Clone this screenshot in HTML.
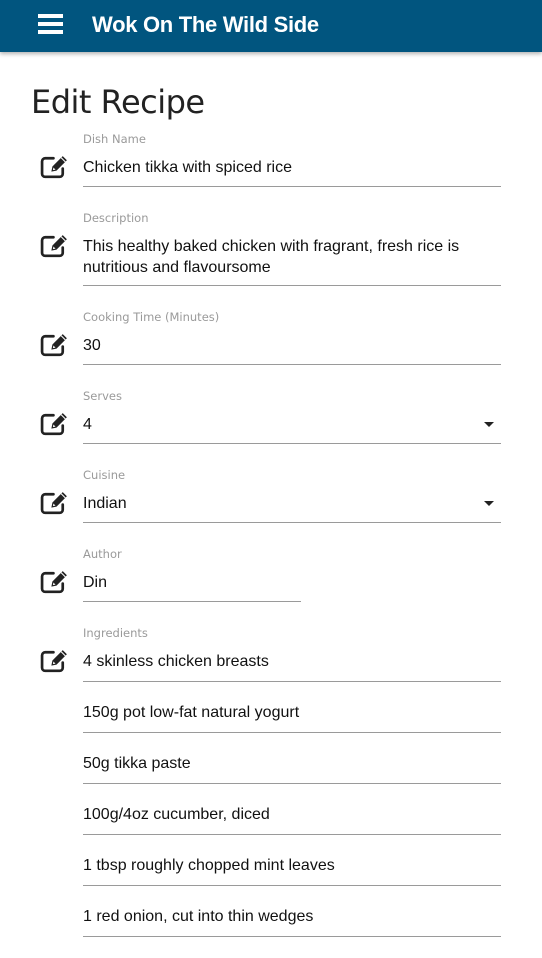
<!DOCTYPE html>
<html><head><meta charset="utf-8"><style>
*{margin:0;padding:0;box-sizing:border-box}
body{width:542px;height:958px;background:#fff;font-family:"Liberation Sans",sans-serif;position:relative;overflow:hidden}
.hdr{position:absolute;left:0;top:0;width:542px;height:52px;background:#01557f;box-shadow:0 2px 4px rgba(0,0,0,.3)}
.hdr .t{position:absolute;left:92px;top:12px;color:#fff;font-size:22px;font-weight:bold;font-family:"Liberation Sans",sans-serif;letter-spacing:-0.3px}
.bar{position:absolute;left:38px;width:25px;height:3.5px;background:#fff}
h1{position:absolute;left:31px;top:83px;font-weight:normal;font-size:32px;color:#222;font-family:"DejaVu Sans",sans-serif;letter-spacing:-0.5px}
.lb{position:absolute;left:83px;font-size:11.5px;color:#9a9a9a;font-family:"DejaVu Sans",sans-serif}
.tx{position:absolute;left:83px;font-size:16px;color:#111;line-height:21px}
.ln{position:absolute;left:83px;width:418px;height:1px;background:#9a9a9a}
.ic{position:absolute;left:40px;width:31px;height:27px}
.ar{position:absolute;left:484px;width:0;height:0;border-left:5px solid transparent;border-right:5px solid transparent;border-top:5px solid #222}
</style></head><body>
<div class="hdr">
<div class="bar" style="top:14px"></div><div class="bar" style="top:22px"></div><div class="bar" style="top:30px"></div>
<div class="t">Wok On The Wild Side</div></div>
<h1>Edit Recipe</h1>

<svg width="0" height="0" style="position:absolute"><defs><g id="pen"><path d="M13 5H5a3 3 0 0 0-3 3v12a3 3 0 0 0 3 3h14a3 3 0 0 0 3-3v-5" fill="none" stroke="#222" stroke-width="2.6" stroke-linecap="round"/><path d="M11 18l1-5 10-10 4 4-10 10z" fill="#222"/><path d="M12.5 16.5l0.5-2.5 2 2z" fill="#fff"/><path d="M20.5 4.5l4 4" stroke="#fff" stroke-width="1"/></g></defs></svg>

<div class="lb" style="top:132px">Dish Name</div>
<svg class="ic" style="top:153px" viewBox="0 0 30 26"><use href="#pen"/></svg>
<div class="tx" style="top:157px">Chicken tikka with spiced rice</div>
<div class="ln" style="top:186px"></div>

<div class="lb" style="top:211px">Description</div>
<svg class="ic" style="top:232px" viewBox="0 0 30 26"><use href="#pen"/></svg>
<div class="tx" style="top:236px">This healthy baked chicken with fragrant, fresh rice is<br>nutritious and flavoursome</div>
<div class="ln" style="top:285px"></div>

<div class="lb" style="top:310px">Cooking Time (Minutes)</div>
<svg class="ic" style="top:331px" viewBox="0 0 30 26"><use href="#pen"/></svg>
<div class="tx" style="top:335px">30</div>
<div class="ln" style="top:364px"></div>

<div class="lb" style="top:389px">Serves</div>
<svg class="ic" style="top:410px" viewBox="0 0 30 26"><use href="#pen"/></svg>
<div class="tx" style="top:414px">4</div>
<div class="ar" style="top:422px"></div>
<div class="ln" style="top:443px"></div>

<div class="lb" style="top:468px">Cuisine</div>
<svg class="ic" style="top:489px" viewBox="0 0 30 26"><use href="#pen"/></svg>
<div class="tx" style="top:493px">Indian</div>
<div class="ar" style="top:501px"></div>
<div class="ln" style="top:522px"></div>

<div class="lb" style="top:547px">Author</div>
<svg class="ic" style="top:568px" viewBox="0 0 30 26"><use href="#pen"/></svg>
<div class="tx" style="top:572px">Din</div>
<div class="ln" style="top:601px;width:218px"></div>

<div class="lb" style="top:626px">Ingredients</div>
<svg class="ic" style="top:647px" viewBox="0 0 30 26"><use href="#pen"/></svg>
<div class="tx" style="top:651px">4 skinless chicken breasts</div>
<div class="ln" style="top:681px"></div>
<div class="tx" style="top:702px">150g pot low-fat natural yogurt</div>
<div class="ln" style="top:732px"></div>
<div class="tx" style="top:753px">50g tikka paste</div>
<div class="ln" style="top:783px"></div>
<div class="tx" style="top:804px">100g/4oz cucumber, diced</div>
<div class="ln" style="top:834px"></div>
<div class="tx" style="top:855px">1 tbsp roughly chopped mint leaves</div>
<div class="ln" style="top:885px"></div>
<div class="tx" style="top:906px">1 red onion, cut into thin wedges</div>
<div class="ln" style="top:936px"></div>
</body></html>
